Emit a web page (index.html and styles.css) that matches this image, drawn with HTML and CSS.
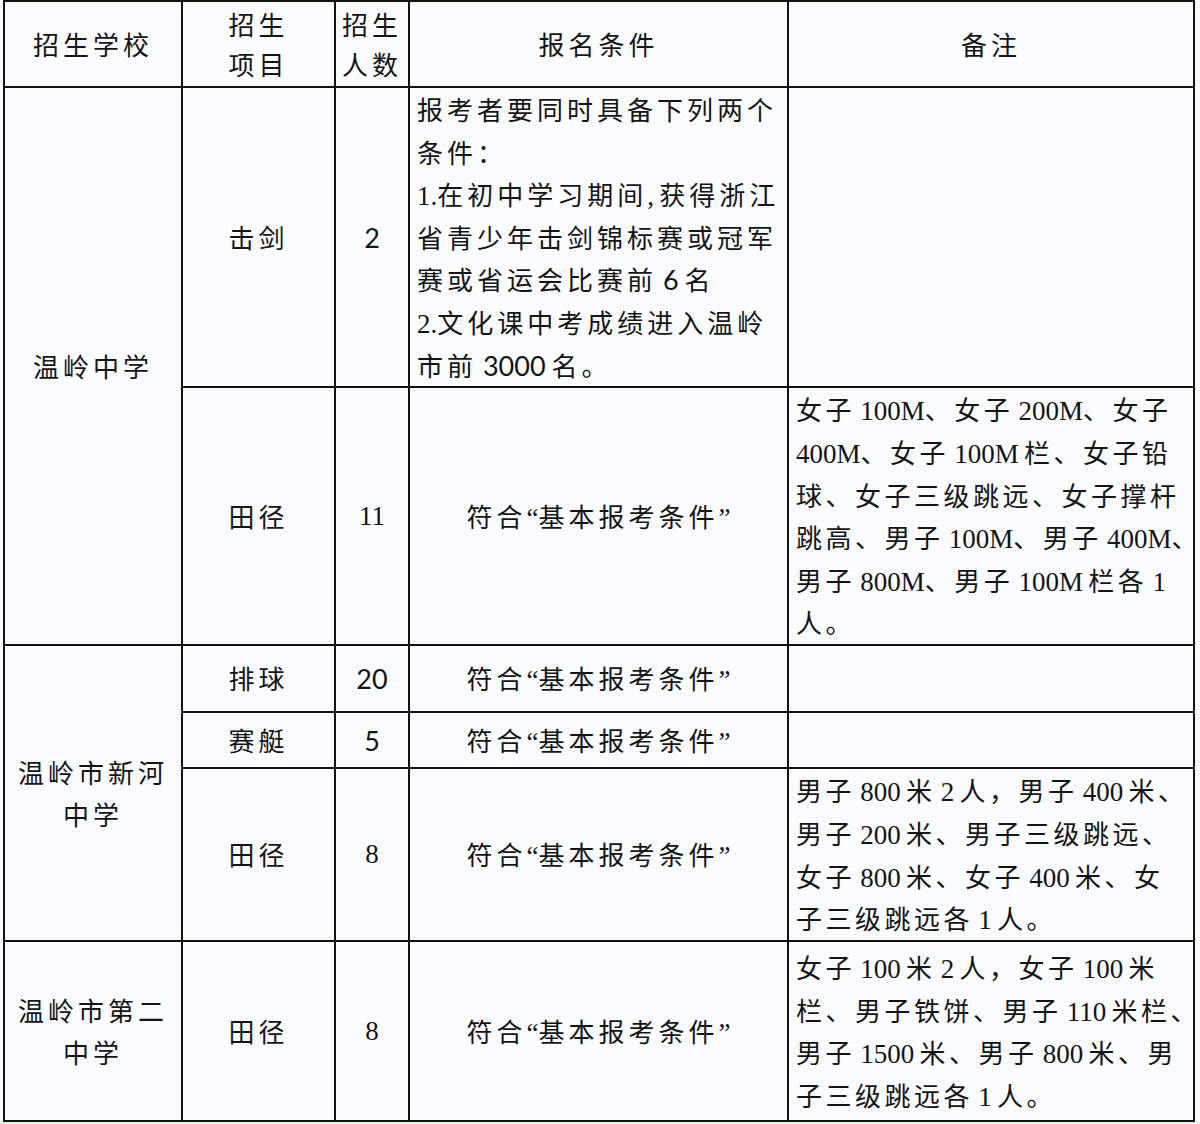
FILE: index.html
```html
<!DOCTYPE html>
<html lang="zh-CN">
<head>
<meta charset="utf-8">
<title>招生计划</title>
<link rel="stylesheet" href="styles.css">
</head>
<body>
<table class="plan">
  <colgroup>
    <col class="c-school">
    <col class="c-item">
    <col class="c-num">
    <col class="c-cond">
    <col class="c-note">
  </colgroup>
  <thead>
    <tr class="r-head">
      <th>招生学校</th>
      <th>招生<br>项目</th>
      <th>招生<br>人数</th>
      <th>报名条件</th>
      <th>备注</th>
    </tr>
  </thead>
  <tbody>
    <tr class="r-fencing">
      <td rowspan="2">温岭中学</td>
      <td>击剑</td>
      <td class="num sn">2</td>
      <td class="text">报考者要同时具备下列两个<br>条件：<br><span class="en">1.</span>在初中学习期间<span class="en">, </span>获得浙江<br>省青少年击剑锦标赛或冠军<br>赛或省运会比赛前<span class="sn"> 6 </span>名<br><span class="en">2.</span>文化课中考成绩进入温岭<br>市前<span class="sn"> 3000 </span>名。</td>
      <td></td>
    </tr>
    <tr class="r-track1">
      <td>田径</td>
      <td class="num en">11</td>
      <td>符合<span class="en">“</span>基本报考条件<span class="en">”</span></td>
      <td class="text note">女子<span class="en"> 100M</span>、女子<span class="en"> 200M</span>、女子<br><span class="en">400M</span>、女子<span class="en"> 100M </span>栏、女子铅<br>球、女子三级跳远、女子撑杆<br>跳高、男子<span class="en"> 100M</span>、男子<span class="en"> 400M</span>、<br>男子<span class="en"> 800M</span>、男子<span class="en"> 100M </span>栏各<span class="en"> 1</span><br>人。</td>
    </tr>
    <tr class="r-volley">
      <td rowspan="3">温岭市新河中学</td>
      <td>排球</td>
      <td class="num sn">20</td>
      <td>符合<span class="en">“</span>基本报考条件<span class="en">”</span></td>
      <td></td>
    </tr>
    <tr class="r-row">
      <td>赛艇</td>
      <td class="num sn">5</td>
      <td>符合<span class="en">“</span>基本报考条件<span class="en">”</span></td>
      <td></td>
    </tr>
    <tr class="r-track2">
      <td>田径</td>
      <td class="num en">8</td>
      <td>符合<span class="en">“</span>基本报考条件<span class="en">”</span></td>
      <td class="text note">男子<span class="en"> 800 </span>米<span class="en"> 2 </span>人，男子<span class="en"> 400 </span>米、<br>男子<span class="en"> 200 </span>米、男子三级跳远、<br>女子<span class="en"> 800 </span>米、女子<span class="en"> 400 </span>米、女<br>子三级跳远各<span class="en"> 1 </span>人。</td>
    </tr>
    <tr class="r-track3">
      <td>温岭市第二中学</td>
      <td>田径</td>
      <td class="num en">8</td>
      <td>符合<span class="en">“</span>基本报考条件<span class="en">”</span></td>
      <td class="text note">女子<span class="en"> 100 </span>米<span class="en"> 2 </span>人，女子<span class="en"> 100 </span>米<br>栏、男子铁饼、男子<span class="en"> 110 </span>米栏、<br>男子<span class="en"> 1500 </span>米、男子<span class="en"> 800 </span>米、男<br>子三级跳远各<span class="en"> 1 </span>人。</td>
    </tr>
  </tbody>
</table>
</body>
</html>
```

FILE: styles.css
```css
html {
  margin: 0;
  padding: 0;
  background: #e9f3e6;
}

body {
  margin: 0;
  padding: 0 0 0 3px;
  background: #fafbfe;
  font-family: "Noto Sans CJK SC", sans-serif;
  color: #141414;
}

.plan {
  border-collapse: collapse;
  table-layout: fixed;
  width: 1190px;
  font-size: 26px;
  letter-spacing: 4px;
  line-height: 42.6px;
}

.c-school { width: 178px; }
.c-item { width: 153px; }
.c-num { width: 74px; }
.c-cond { width: 379px; }
.c-note { width: 406px; }

.plan th,
.plan td {
  border: 2px solid #111;
  padding: 0 6px;
  text-align: center;
  vertical-align: middle;
  font-weight: 400;
}

.plan th {
  line-height: 40px;
}

.r-head { height: 86px; }
.r-fencing { height: 300px; }
.r-track1 { height: 258px; }
.r-volley { height: 67px; }
.r-row { height: 56px; }
.r-track2 { height: 173px; }
.r-track3 { height: 180px; }

.plan td.text {
  text-align: left;
  white-space: nowrap;
  padding-left: 7px;
  padding-right: 0;
}

.plan td.note {
  letter-spacing: 3.5px;
}

.en {
  font-family: "Liberation Serif", "Noto Sans CJK SC", serif;
  font-size: 27px;
  line-height: 1;
  letter-spacing: 0;
  word-spacing: -1.5px;
}

.sn {
  font-family: "Lato", "Noto Sans CJK SC", sans-serif;
  font-size: 27px;
  line-height: 1;
  letter-spacing: 0;
  word-spacing: -1px;
}

.num {
  letter-spacing: 0;
}
```
